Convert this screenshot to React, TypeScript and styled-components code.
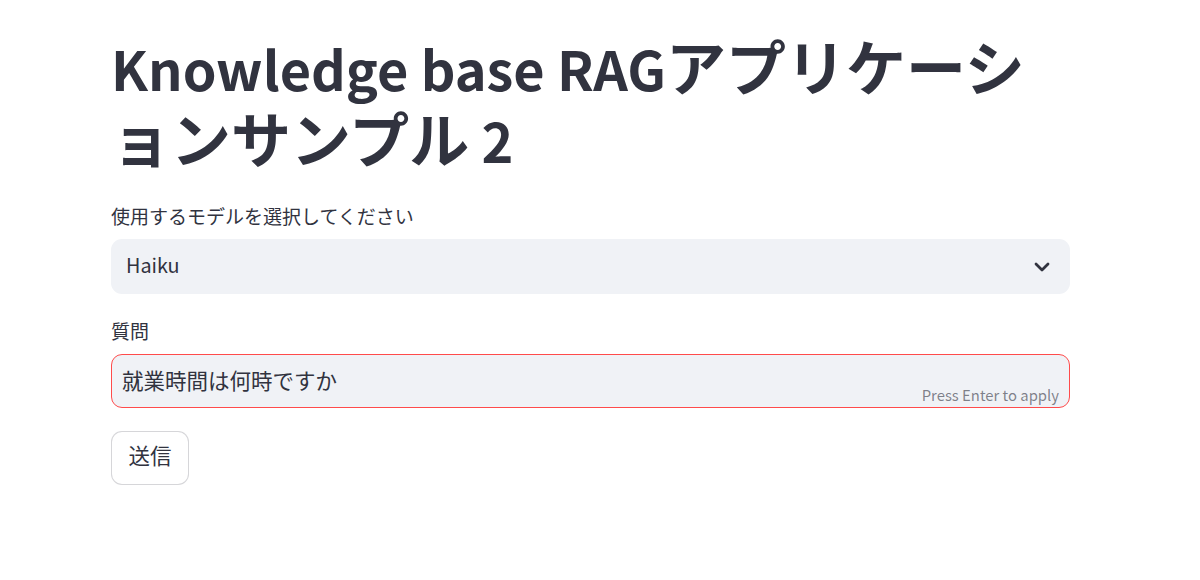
import React from "react";
import styled, { createGlobalStyle } from "styled-components";

const Global = createGlobalStyle`
  html, body { margin: 0; padding: 0; background: #ffffff; }
  body {
    font-family: "Noto Sans CJK JP", "Source Sans Pro", "Noto Sans", sans-serif;
    color: rgb(49, 51, 63);
    -webkit-font-smoothing: antialiased;
  }
`;

const Page = styled.main`
  width: 1200px;
  min-height: 580px;
  box-sizing: border-box;
  padding: 29px 0 0 111px;
`;

const Block = styled.div`
  width: 959px;
  display: flex;
  flex-direction: column;
`;

const Latin = styled.span`
  font-size: 0.9em;
  line-height: 1;
`;

const Kana = styled.span`
  line-height: 1;
`;

const Title = styled.h1`
  margin: 0;
  font-size: 60px;
  font-weight: 700;
  line-height: 72px;
  color: rgb(49, 51, 63);
`;

const Field = styled.div<{ $top: number }>`
  display: flex;
  flex-direction: column;
  margin-top: ${(p) => p.$top}px;
`;

const Label = styled.label`
  font-size: 19px;
  line-height: 26px;
  color: rgb(49, 51, 63);
  margin-bottom: 10px;
`;

const Select = styled.div`
  height: 55px;
  box-sizing: border-box;
  background: #f0f2f6;
  border-radius: 11px;
  display: flex;
  align-items: center;
  justify-content: space-between;
  padding: 0 20px 3px 15px;
  font-size: 22px;
  color: rgb(49, 51, 63);
`;

const ChevronWrap = styled.span`
  display: flex;
  margin-top: 3px;
`;

const InputBox = styled.div`
  position: relative;
  height: 54px;
  box-sizing: border-box;
  background: #f0f2f6;
  border: 1px solid #ff4b4b;
  border-radius: 11px;
  display: flex;
  align-items: center;
  padding: 0 12px 3px 10px;
  font-size: 21.5px;
  color: rgb(49, 51, 63);
`;

const Hint = styled.span`
  position: absolute;
  right: 10px;
  bottom: 3px;
  font-size: 16.5px;
  line-height: 20px;
  color: rgba(49, 51, 63, 0.6);
`;

const Button = styled.button`
  margin-top: 23px;
  align-self: flex-start;
  width: 78px;
  height: 54px;
  box-sizing: border-box;
  background: #ffffff;
  border: 1px solid rgba(49, 51, 63, 0.2);
  border-radius: 11px;
  font-family: inherit;
  font-size: 21.5px;
  color: rgb(49, 51, 63);
  padding: 0 0 7px 0;
  cursor: pointer;
`;

const Chevron = () => (
  <svg width="16" height="10" viewBox="0 0 16 10" fill="none">
    <path d="M2 2 L8 8 L14 2" stroke="rgb(49,51,63)" strokeWidth="2.8" strokeLinecap="round" strokeLinejoin="round" />
  </svg>
);

export default function App() {
  return (
    <>
      <Global />
      <Page>
        <Block>
          <Title>
            <Latin>Knowledge base RAG</Latin>
            <Kana>アプリケーシ</Kana>
            <Kana>ョンサンプル</Kana>
            <Latin> 2</Latin>
          </Title>
          <Field $top={30}>
            <Label>使用するモデルを選択してください</Label>
            <Select>
              <Latin>Haiku</Latin>
              <ChevronWrap>
                <Chevron />
              </ChevronWrap>
            </Select>
          </Field>
          <Field $top={24}>
            <Label>質問</Label>
            <InputBox>
              <span>就業時間は何時ですか</span>
              <Hint>
                <Latin>Press Enter to apply</Latin>
              </Hint>
            </InputBox>
          </Field>
          <Button>送信</Button>
        </Block>
      </Page>
    </>
  );
}
